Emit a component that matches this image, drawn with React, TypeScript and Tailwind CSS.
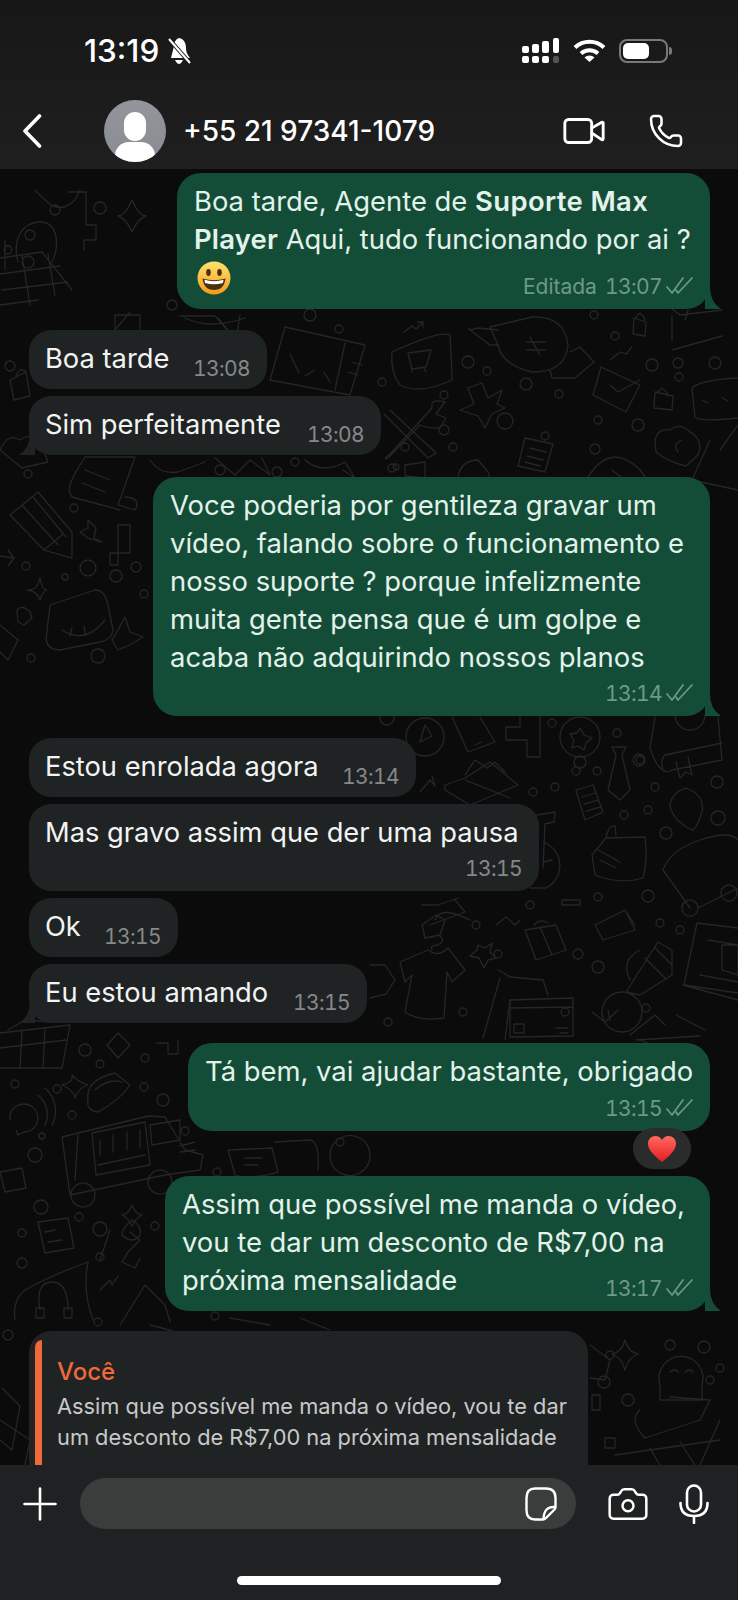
import { Camera, Phone, Video } from "lucide-react";
import type { ReactNode } from "react";

const font = "font-['Inter','Noto_Sans',sans-serif]";

// wallpaper doodles, in page coordinates
const doodleCircles = [
  [8, 250, 4], [28, 262, 6], [30, 235, 5], [55, 210, 5], [100, 208, 6], [10, 366, 5],
  [172, 305, 5], [310, 315, 6], [339, 329, 4], [220, 470, 5], [277, 472, 5], [295, 462, 4],
  [28, 474, 4], [74, 508, 4], [88, 568, 8], [116, 576, 6], [136, 567, 5], [26, 566, 4],
  [144, 594, 4], [65, 577, 3], [31, 658, 4], [98, 656, 7], [468, 362, 6], [487, 371, 4],
  [382, 382, 4], [526, 384, 6], [559, 394, 4], [444, 395, 4], [444, 430, 5], [453, 447, 4],
  [505, 421, 8], [598, 420, 4], [638, 425, 6], [595, 449, 5], [652, 365, 6], [678, 363, 5],
  [615, 336, 4], [594, 315, 4], [715, 363, 6], [679, 377, 4], [392, 468, 4], [405, 447, 4],
  [396, 467, 3], [545, 436, 4], [387, 718, 7], [552, 723, 4], [617, 733, 4], [639, 760, 6],
  [580, 762, 6], [576, 771, 4], [597, 771, 4], [533, 792, 4], [555, 787, 4], [655, 787, 4],
  [640, 760, 4], [648, 810, 4], [624, 815, 4], [717, 782, 6], [718, 818, 7], [666, 833, 6],
  [530, 905, 4], [598, 897, 4], [648, 896, 6], [660, 923, 4], [680, 930, 4], [578, 954, 5],
  [598, 967, 6], [498, 954, 4], [476, 925, 4], [463, 1012, 4], [565, 1012, 4], [646, 1008, 4],
  [388, 1022, 4], [85, 1050, 6], [145, 1058, 4], [100, 1064, 4], [15, 1084, 4], [57, 1089, 4],
  [144, 1087, 4], [163, 1100, 6], [72, 1115, 4], [35, 1155, 7], [42, 1136, 3], [185, 1131, 4],
  [217, 1172, 4], [340, 1142, 4], [41, 1207, 7], [79, 1217, 4], [22, 1233, 4], [100, 1229, 7],
  [155, 1226, 4], [22, 1263, 5], [100, 1257, 4], [98, 1322, 4], [215, 1316, 4], [610, 1355, 4],
  [670, 1345, 5], [704, 1347, 6], [720, 1368, 4], [604, 1382, 6], [628, 1400, 6], [710, 1380, 4],
  [150, 1345, 5], [168, 1374, 4], [190, 1338, 5], [8, 1335, 5],
];

const doodlePaths = [
  // top cart and head
  "M0 258 L42 252 L72 290 M2 290 L68 282 M22 256 L30 305 M48 254 L55 296 M0 274 L60 266 M0 305 L38 300",
  "M18 262 C12 240 22 222 40 222 C58 222 60 245 52 262",
  "M5 240 L5 270 M35 190 L45 200 Q60 215 75 200 L80 190",
  "M68 192 L86 192 L86 225 L96 225 L96 240 L84 240 L84 250",
  "M132 200 Q126 215 118 216 Q126 218 132 232 Q138 218 146 216 Q138 215 132 200",
  // top strip
  "M10 380 L26 372 L30 396 L14 400 Z M16 376 Q20 366 26 372",
  "M0 450 Q8 432 20 440 Q30 432 40 442 L48 462 L22 468 Z",
  "M115 330 L130 312 M180 316 L215 316 L236 340 L240 315",
  "M115 315 L140 315 L140 340 L115 340 Z",
  // chart panel
  "M285 327 L365 345 L350 395 L270 380 Z M290 354 L299 373 M305 376 L315 370 M324 372 L330 382 M345 343 L335 390 M352 362 L362 365 M348 372 L358 375",
  "M185 318 Q210 330 245 318 M218 318 L240 345",
  // scroll
  "M85 457 L135 457 L118 505 L135 510 Q142 498 125 497 M85 457 C70 480 66 490 72 497 L120 510 M85 470 L110 480 M82 483 L105 492",
  "M150 460 Q160 475 178 472 L205 462 M215 458 L235 475 L250 460 L270 475 L262 458",
  "M305 460 Q322 475 345 462 L355 478 L343 470",
  // pencil
  "M10 515 L38 492 L72 532 L72 558 L44 550 Z M22 505 L58 545 M33 497 L66 537 M44 550 L62 535",
  // apple core and tetris
  "M88 520 L96 528 L94 538 L102 542 L88 538 L80 532 L88 528 Z",
  "M118 525 L130 525 L130 553 L118 553 L118 565 L110 565 L110 553 L118 553 Z",
  "M0 556 L14 558 L8 550 M14 558 L8 566",
  "M40 578 Q38 590 28 590 Q38 592 40 600 Q42 592 47 590 Q42 590 40 578",
  "M17 610 Q22 604 30 612 L32 618 L24 625 L18 622 Z",
  "M0 625 L18 640 L8 660 L0 652",
  // monster
  "M50 605 L95 590 Q105 590 108 605 L113 630 Q112 640 100 642 L60 650 Q48 650 46 640 Z M62 630 Q85 645 105 620 M70 636 L72 628 M85 634 L84 626",
  "M125 617 L130 632 L143 637 L130 645 L118 650 L112 640 L118 630 Z",
  // shopping bag
  "M392 352 Q440 330 450 335 Q452 370 452 380 Q420 395 400 385 Q390 372 392 352 Z M408 353 L431 350 L426 367 L412 369 Z M412 369 L412 372 M424 368 L426 372",
  "M404 332 L412 326 L416 329 L423 322 M418 322 L423 322 L423 327",
  // rupee blob and arrows
  "M490 327 L532 317 Q565 316 568 345 Q566 372 532 372 Q502 365 498 345 Z M498 330 L478 328 L470 330 L468 328 M527 342 L545 342 M527 350 L545 350 M530 337 L540 355",
  "M470 330 L490 345 L498 345 M550 370 L552 378 L575 378 L594 362 L580 347 L570 352",
  "M610 360 L620 352 L626 354 L632 347",
  // burst
  "M482 383 L488 398 L502 390 L497 404 L505 408 L492 414 L485 428 L478 416 L460 410 L474 404 L468 388 Z",
  // wrench
  "M390 454 L432 408 Q430 398 445 402 L436 414 L446 418 L440 428 Q426 428 420 425 L388 458 Q382 460 390 454 M390 410 L436 453 L428 458 L384 414",
  // note and checked box
  "M525 438 L553 444 L545 472 L518 466 Z M530 448 L546 452 M527 456 L543 460 M525 462 L540 466",
  "M601 367 L640 385 L626 412 L593 395 Z M610 385 L618 392 L640 380",
  // locks
  "M634 318 L646 322 L645 336 L633 334 Z M636 318 Q640 308 645 320",
  "M655 392 L673 396 L672 410 L654 408 Z M658 392 Q664 384 668 396",
  // password box, cart
  "M692 388 Q700 380 738 378 M692 388 L695 417 Q700 422 738 418 M702 400 L708 403 M722 398 L728 401",
  "M660 300 L680 315 L722 310 M672 316 L672 340 M688 310 L685 320 M672 350 L722 336",
  // cloud, document
  "M655 440 Q658 428 670 430 Q680 422 690 432 Q704 440 698 455 L686 466 Q668 462 656 452 Z M682 440 Q672 444 678 452",
  "M586 480 Q610 440 640 470 L646 478 M612 470 L622 478",
  "M710 440 L692 480 L738 490 M738 425 L720 450",
  "M405 465 L425 462 L425 478 L405 476 Z M458 476 Q462 460 478 460 L488 472 L490 478",
  // play circle, phone, tetris
  "M425 725 L432 736 L420 742 Z M406 737 A19 19 0 1 0 444 737 A19 19 0 1 0 406 737",
  "M452 717 L468 752 L495 742 L480 717 M475 745 L482 742",
  "M506 727 L520 727 L520 712 L540 712 L540 757 L527 757 L527 740 L506 740 Z",
  // star coin, tie, book
  "M560 737 A20 20 0 1 0 600 737 A20 20 0 1 0 560 737 M580 728 L584 735 L592 738 L586 743 L584 750 L578 746 L572 748 L574 740 L570 734 L577 733 Z",
  "M612 747 L626 747 L622 755 L630 790 L620 800 L608 790 L616 755 Z",
  "M655 717 L650 748 Q660 778 672 770 L722 760 L718 717 M663 770 Q660 760 665 755 L722 743 M676 762 L680 778 L686 772 L692 775 L688 757",
  "M675 715 A15 15 0 0 0 705 715",
  // fruit plate, arrow, dress
  "M445 785 L465 778 L490 762 L518 785 L506 790 L470 805 L445 790 Z M465 780 L510 798",
  "M465 775 L475 760 L487 768 L495 762 L505 772",
  "M420 792 L430 780 L435 786 L432 776",
  "M576 790 L593 785 L603 812 L585 820 Z M582 797 L595 793 M584 804 L598 800 M586 811 L600 807",
  "M686 788 Q705 795 702 812 Q696 830 692 830 Q672 820 670 805 Q672 792 686 788 Z",
  // bags
  "M592 855 L606 838 L645 837 Q648 860 643 878 Q620 885 595 875 Z M606 838 Q608 825 615 826 L616 836 M598 850 L620 862 M600 860 L616 868",
  // bicycle
  "M537 815 L555 812 L554 822 L545 824 L543 868 M543 842 A25 25 0 0 1 546 888 L530 888 M543 862 L552 860",
  // blob and dumbbell
  "M663 870 Q670 850 700 840 Q730 830 738 840 M663 870 L690 908 M698 908 L738 888",
  "M698 908 A8 8 0 1 0 698 908.1 M737 893 A8 8 0 1 0 737 893.1",
  "M562 900 L580 900 L580 905 L562 905 Z M595 925 L625 910 L635 930 L603 940 Z M625 910 L635 925",
  // shirt, hanger, star, sparkle
  "M400 962 L428 950 Q438 958 448 948 L465 970 L452 982 L447 972 L444 1018 Q420 1022 405 1012 L412 975 L405 982 Z M432 950 Q430 945 438 945 Q446 940 440 936",
  "M478 945 L485 948 L492 943 L490 952 L496 958 L488 960 L484 968 L479 958 L470 956 L477 950 Z",
  "M422 925 L436 915 L445 920 L440 935 L425 938 Z",
  // stems
  "M422 905 L438 905 L458 898 M470 920 Q440 905 435 920 M455 900 L465 912 L430 925",
  "M496 925 L506 917 L515 925 L520 920",
  // luggage
  "M525 930 L556 925 L566 950 L536 960 Z M534 925 Q540 918 548 923 M540 927 L552 955",
  "M602 1012 A20 20 0 1 0 642 1012 A20 20 0 1 0 602 1012 M592 1012 L605 1022 L618 1010 M608 1010 L610 1020",
  "M498 970 L510 977 L543 980 L548 995 M500 978 L483 1038 M510 1000 L505 1040",
  // card
  "M510 1000 L573 998 L573 1036 L510 1037 Z M510 1008 L573 1007 M514 1024 L524 1024 L524 1033 L514 1033 Z M556 1028 L568 1028 M560 1033 L568 1033",
  // corn
  "M626 992 L658 942 L672 950 L672 975 L640 995 Z M630 980 Q620 960 640 950 M645 958 L665 978 M655 948 L672 965",
  // laptop and gift
  "M697 923 L738 928 M697 923 L684 985 L738 993 M683 985 L738 1000 M708 940 L738 945 M700 975 L738 982 M722 945 L738 945 L738 975 L722 970 Z",
  // gear
  "M370 965 L385 965 L395 980 L386 994 L370 998",
  "M630 1035 L655 1015 L665 1025 M636 1040 L700 1036 M676 1015 L705 1030 M640 1040 L650 1044",
  // basket lower left
  "M0 1033 L70 1025 L62 1068 L0 1068 M0 1048 L66 1040 M22 1030 L20 1068 M45 1028 L43 1068 M8 1030 L25 1020 L52 1022",
  "M118 1033 L130 1045 L118 1058 L107 1045 Z",
  "M72 1075 Q74 1082 62 1085 Q74 1090 75 1098 Q78 1088 88 1085 Q78 1082 72 1075",
  "M157 1043 L168 1043 L168 1054 L178 1054 L178 1040",
  // taco
  "M88 1100 Q85 1080 115 1073 L130 1085 Q120 1100 98 1112 Q86 1110 88 1100 Z M95 1090 Q108 1078 122 1082",
  // radio
  "M10 1120 A14 14 0 1 1 24 1132 L18 1135 L16 1130 M38 1095 A25 25 0 0 1 45 1125 M45 1088 A30 30 0 0 1 52 1125",
  // van
  "M62 1137 L148 1116 L165 1117 L185 1150 L203 1155 L200 1170 L165 1175 L70 1195 Z M78 1135 L75 1180 M92 1133 L145 1122 L150 1165 L96 1175 Z M100 1140 L100 1155 M113 1135 L113 1152 M127 1132 L127 1150 M140 1130 L140 1148 M150 1125 L180 1120 L180 1140 L152 1145 Z M98 1165 L145 1155",
  "M95 1195 A12 12 0 1 0 95 1195.1 M172 1182 A12 12 0 1 0 172 1182.1",
  "M195 1142 L180 1146 M195 1150 L180 1152",
  // bubble and square
  "M228 1150 L272 1148 L278 1172 Q250 1180 235 1175 Z M245 1158 L262 1158 M245 1165 L258 1165",
  "M275 1142 L310 1140 Q320 1142 318 1170 M370 1155 A20 20 0 1 0 370 1156",
  // money bag
  "M0 1172 L22 1168 L26 1188 L5 1192 Z",
  // note, pin, doll
  "M38 1222 L68 1218 L74 1248 L45 1253 Z M45 1232 L55 1230 M48 1242 L62 1240",
  "M110 1230 L100 1260",
  "M132 1220 Q122 1228 122 1235 Q132 1245 140 1235 Q142 1225 132 1220 Z",
  "M130 1232 L140 1240 L128 1252 L122 1262 L135 1268 L140 1258",
  "M132 1205 Q128 1215 122 1215 Q128 1218 132 1226 Q136 1218 142 1215 Q136 1215 132 1205",
  // headset blob
  "M88 1262 Q52 1275 25 1290 Q12 1300 15 1320 M88 1262 Q82 1290 93 1320 M40 1310 Q35 1282 52 1282 Q68 1282 68 1310 M36 1308 L44 1308 L44 1318 L36 1318 Z M64 1308 L72 1308 L72 1318 L64 1318 Z",
  "M100 1290 L110 1280 L112 1285 L118 1276",
  "M120 1325 L145 1285 L165 1305 L170 1322",
  "M230 1318 L270 1325 M300 1318 L330 1330",
  // lower strip
  "M2 1388 L20 1406 L12 1450 L0 1440 M0 1420 L30 1440 L25 1465",
  // right bottom
  "M625 1340 Q622 1352 612 1354 Q622 1358 625 1370 Q628 1358 638 1354 Q628 1352 625 1340",
  "M660 1385 A22 22 0 1 1 702 1385 L702 1400 L660 1400 Z M670 1372 Q675 1368 678 1372 M685 1372 Q690 1368 693 1372",
  "M640 1410 Q628 1420 645 1438 L700 1420 L710 1400 L670 1397",
  "M605 1438 L615 1438 L615 1448 L605 1448 Z M592 1395 L600 1395 L600 1410 L592 1410 Z",
  "M615 1455 L720 1440 M650 1448 L660 1465 M680 1442 L695 1465 M720 1420 L700 1465",
  "M590 1345 L610 1360 L605 1380 L590 1378",
  "M120 1332 L135 1350 L110 1345 L100 1332 M150 1325 Q170 1330 175 1332",
];

function Doodles() {
  return (
    <svg
      viewBox="0 169 738 1296"
      className="absolute inset-0 h-full w-full"
      fill="none"
      stroke="#262626"
      strokeWidth="1.3"
      strokeLinejoin="round"
      strokeLinecap="round"
    >
      {doodlePaths.map((d, i) => (
        <path key={i} d={d} />
      ))}
      {doodleCircles.map(([cx, cy, r], i) => (
        <circle key={i} cx={cx} cy={cy} r={r} />
      ))}
    </svg>
  );
}

function Ticks() {
  return (
    <svg width="28" height="18" viewBox="0 0 28 18" fill="none" stroke="#6d9a86" strokeWidth="1.7" strokeLinecap="round" strokeLinejoin="round" className="ml-1 mb-[3px] shrink-0">
      <path d="M1 10 L6 16 L17 1" />
      <path d="M10 13 L12 16 L26 1" />
    </svg>
  );
}

function Out({ width, tail, children, time, pre, rowClass }: { width: string; tail?: boolean; children: ReactNode; time: string; pre?: string; rowClass?: string }) {
  return (
    <div className={`relative self-end mr-[28px] rounded-[24px] bg-[#134d38] pl-[17px] pr-[16px] pt-[9px] pb-[4px] ${width}`}>
      <div className="whitespace-nowrap text-[27.4px] leading-[38px] text-[#e3f2ea]">{children}</div>
      <div className={`flex h-[36px] items-center justify-end text-[21px] text-[#6d9a86] ${rowClass ?? ""}`}>
        {pre && <span className="mr-[8px]">{pre}</span>}
        <span className="tracking-[-0.6px] tabular-nums">{time}</span>
        <Ticks />
      </div>
      {tail && (
        <svg width="16" height="22" viewBox="0 0 16 22" className="absolute -right-[11px] bottom-0" fill="#134d38">
          <path d="M0 0 L5 0 Q5 15 16 22 L0 22 Z" />
        </svg>
      )}
    </div>
  );
}

function In({ width, tail, children, time, stacked }: { width: string; tail?: boolean; children: ReactNode; time: string; stacked?: boolean }) {
  return (
    <div className={`relative self-start ml-[29px] rounded-[22px] bg-[#202323] pl-[16px] pr-[17px] pt-[10px] ${stacked ? "pb-[5px]" : "flex h-[59px] justify-between"} ${width}`}>
      <div className="whitespace-nowrap text-[27.3px] leading-[38px] text-[#f2f3f3]">{children}</div>
      <div className={`text-[21px] tracking-[-0.6px] tabular-nums text-[#85888a] ${stacked ? "flex h-[34px] items-center justify-end" : "mt-[16px] leading-[26px]"}`}>{time}</div>
      {tail && (
        <svg width="16" height="22" viewBox="0 0 16 22" className="absolute -left-[10px] bottom-0" fill="#202323">
          <path d="M16 0 L11 0 Q11 15 0 22 L16 22 Z" />
        </svg>
      )}
    </div>
  );
}

function Smiley() {
  return (
    <svg width="34" height="34" viewBox="0 0 34 34" className="mt-[2px]">
      <defs>
        <linearGradient id="sm" x1="0" y1="0" x2="0" y2="1">
          <stop offset="0" stopColor="#ffe36b" />
          <stop offset="1" stopColor="#f39a1f" />
        </linearGradient>
      </defs>
      <circle cx="17" cy="17" r="16.5" fill="url(#sm)" />
      <ellipse cx="11.5" cy="11.5" rx="2.3" ry="3.4" fill="#4a2f10" />
      <ellipse cx="22.5" cy="11.5" rx="2.3" ry="3.4" fill="#4a2f10" />
      <path d="M5.5 17.5 Q17 21 28.5 17.5 Q27 29 17 29 Q7 29 5.5 17.5 Z" fill="#4a2f10" />
      <path d="M7.5 18.8 Q17 21.5 26.5 18.8 L26 22 Q17 24.5 8 22 Z" fill="#fff" />
    </svg>
  );
}

function Heart() {
  return (
    <svg width="30" height="28" viewBox="0 0 30 28">
      <defs>
        <linearGradient id="ht" x1="0" y1="0" x2="0" y2="1">
          <stop offset="0" stopColor="#ff6a5e" />
          <stop offset="1" stopColor="#e51c22" />
        </linearGradient>
      </defs>
      <path d="M15 27 C5 19 1 14 1 8.5 C1 4 4.5 1 8.5 1 C11.5 1 14 2.8 15 5 C16 2.8 18.5 1 21.5 1 C25.5 1 29 4 29 8.5 C29 14 25 19 15 27 Z" fill="url(#ht)" />
    </svg>
  );
}

function StatusIcons() {
  return (
    <div className="flex items-center">
      {/* signal, two sims */}
      <svg width="38" height="26" viewBox="0 0 38 26" fill="#fff">
        <rect x="0" y="8" width="7" height="7" rx="2" />
        <rect x="0" y="18" width="7" height="7" rx="2" />
        <rect x="10" y="6" width="7" height="9" rx="2" />
        <rect x="10" y="18" width="7" height="7" rx="2" />
        <rect x="20" y="3" width="7" height="12" rx="2" />
        <rect x="20" y="18" width="7" height="7" rx="2" />
        <rect x="31" y="0" width="6" height="15" rx="2" />
        <rect x="31" y="18" width="6" height="7" rx="2" fill="#555" />
      </svg>
      <svg width="33" height="24" viewBox="0 0 33 24" fill="none" stroke="#fff" strokeWidth="4" className="ml-[13px]">
        <path d="M2 8.5 A21 21 0 0 1 31 8.5" />
        <path d="M8 14.5 A13 13 0 0 1 25 14.5" />
        <path d="M16.5 23 L11.5 18.5 A7 7 0 0 1 21.5 18.5 Z" fill="#fff" stroke="none" />
      </svg>
      <div className="ml-[13px] flex items-center">
        <div className="flex h-[24px] w-[49px] items-center rounded-[8px] border-2 border-[#77797a] p-[2px]">
          <div className="h-full w-[26px] rounded-[5px] bg-white" />
        </div>
        <div className="ml-[1px] h-[8px] w-[3px] rounded-r-full bg-[#77797a]" />
      </div>
    </div>
  );
}

export default function App() {
  return (
    <div className={`flex h-[1600px] w-full flex-col overflow-hidden bg-[#0b0b0b] ${font}`}>
      {/* top bar */}
      <header className="h-[169px] shrink-0 bg-gradient-to-b from-[#171717] to-[#1f1f1f] text-white">
        <div className="flex h-[101px] items-center pl-[84px] pr-[66px] pt-[1px]">
          <span className="text-[31.5px] font-medium">13:19</span>
          <svg width="26" height="28" viewBox="0 0 26 28" fill="#fff" className="ml-[7px]">
            <path d="M13 1 C18 2 20 6 20 11 C20 16 22 18 24 21 L5 21 L8 9 C8 5 10 2 13 1 Z" />
            <path d="M9 23 L17 23 Q15 27 13 27 Q11 27 9 23 Z" />
            <path d="M3 2 L24 26" stroke="#1a1a1a" strokeWidth="4" />
            <path d="M3 2 L24 26" stroke="#fff" strokeWidth="2" />
          </svg>
          <div className="ml-auto">
            <StatusIcons />
          </div>
        </div>
        <div className="flex h-[60px] items-center pl-[22px] pr-[54px]">
          <svg width="20" height="34" viewBox="0 0 20 34" fill="none" stroke="#fff" strokeWidth="3.6" strokeLinecap="round" strokeLinejoin="round">
            <path d="M17.5 2 L3 17 L17.5 32" />
          </svg>
          <div className="relative ml-[62px] h-[62px] w-[62px] shrink-0 overflow-hidden rounded-full bg-gradient-to-b from-[#93959c] to-[#8a8c94]">
            <div className="absolute left-[20px] top-[12px] h-[29px] w-[22px] rounded-full bg-white" />
            <div className="absolute left-[11px] top-[42px] h-[28px] w-[40px] rounded-full bg-white" />
          </div>
          <span className="ml-[17px] text-[28px] font-medium">+55 21 97341-1079</span>
          <Video size={46} strokeWidth={1.5} className="ml-auto" />
          <Phone size={36} strokeWidth={1.7} className="ml-[41px]" />
        </div>
      </header>

      {/* messages */}
      <main className="relative min-h-0 flex-1 overflow-hidden">
        <Doodles />
        <div className="relative flex flex-col pt-[4px]">
          <Out width="w-[533px]" tail time="13:07" pre="Editada" rowClass="mt-[11px]">
            Boa tarde, Agente de <b className="font-semibold tracking-[0.4px]">Suporte Max</b>
            <br />
            <b className="font-semibold tracking-[0.2px]">Player</b> Aqui, tudo funcionando por ai ?
            <div className="absolute bottom-[14px] left-[20px]">
              <Smiley />
            </div>
          </Out>
          <div className="mt-[21px]" />
          <In width="w-[238px]" time="13:08">Boa tarde</In>
          <div className="mt-[7px]" />
          <In width="w-[352px]" tail time="13:08">Sim perfeitamente</In>
          <div className="mt-[22px]" />
          <Out width="w-[557px]" tail time="13:14">
            Voce poderia por gentileza gravar um
            <br />
            vídeo, falando sobre o funcionamento e
            <br />
            nosso suporte ? porque infelizmente
            <br />
            muita gente pensa que é um golpe e
            <br />
            acaba não adquirindo nossos planos
          </Out>
          <div className="mt-[22px]" />
          <In width="w-[387px]" time="13:14">Estou enrolada agora</In>
          <div className="mt-[7px]" />
          <In width="w-[510px]" stacked time="13:15">Mas gravo assim que der uma pausa</In>
          <div className="mt-[7px]" />
          <In width="w-[149px]" time="13:15">Ok</In>
          <div className="mt-[7px]" />
          <In width="w-[338px]" tail time="13:15">Eu estou amando</In>
          <div className="mt-[20px]" />
          <div className="relative self-end">
            <Out width="w-[522px]" time="13:15" rowClass="mt-[1px]">Tá bem, vai ajudar bastante, obrigado</Out>
            <div className="absolute right-[47px] top-[85px] flex h-[41px] w-[58px] items-center justify-center rounded-full bg-[#2a2c2c]">
              <Heart />
            </div>
          </div>
          <div className="mt-[45px]" />
          <Out width="w-[545px]" tail time="13:17" rowClass="-mt-[28px]">
            Assim que possível me manda o vídeo,
            <br />
            vou te dar um desconto de R$7,00 na
            <br />
            próxima mensalidade
          </Out>
          <div className="mt-[20px]" />
          {/* quoted reply, cut off by the composer */}
          <div className="ml-[29px] w-[559px] rounded-t-[22px] bg-[#202323] pl-[6px] pt-[9px]">
            <div className="flex h-[200px]">
              <div className="w-[7px] shrink-0 rounded-l-[8px] bg-[#f0693a]" />
              <div className="pl-[15px] pt-[12px] whitespace-nowrap">
                <div className="text-[24px] font-medium leading-[39px] text-[#f0693a]">Você</div>
                <div className="text-[21.8px] leading-[31px] text-[#c7c9ca]">
                  Assim que possível me manda o vídeo, vou te dar
                  <br />
                  um desconto de R$7,00 na próxima mensalidade
                </div>
              </div>
            </div>
          </div>
        </div>
      </main>

      {/* composer */}
      <footer className="flex h-[135px] shrink-0 flex-col bg-[#1f2122] text-white">
        <div className="flex items-center pl-[23px] pt-[13px]">
          <svg width="34" height="34" viewBox="0 0 34 34" stroke="#fff" strokeWidth="2.6" strokeLinecap="round">
            <path d="M17 1.5 L17 32.5 M1.5 17 L32.5 17" />
          </svg>
          <div className="ml-[23px] flex h-[51px] w-[496px] items-center justify-end rounded-full bg-[#3b3d3d] pr-[19px]">
            <svg width="32" height="34" viewBox="0 0 32 34" fill="none" stroke="#fff" strokeWidth="2.4" strokeLinejoin="round" strokeLinecap="round">
              <path d="M10 1.5 L21 1.5 Q30.5 1.5 30.5 11 L30.5 20 Q30.5 22 29 23 L21 31 Q19.5 32.5 17.5 32.5 L10 32.5 Q1.5 32.5 1.5 23 L1.5 11 Q1.5 1.5 10 1.5 Z" />
              <path d="M30 20 Q19 19 18.5 32" />
            </svg>
          </div>
          <Camera size={44} strokeWidth={1.35} className="ml-[30px]" />
          <svg width="30" height="40" viewBox="0 0 30 40" fill="none" stroke="#fff" strokeWidth="2.6" strokeLinecap="round" className="ml-[29px]">
            <rect x="8" y="1.5" width="14" height="26" rx="7" />
            <path d="M1.5 19 Q1.5 32 15 32 Q28.5 32 28.5 19 M15 32 L15 39" />
          </svg>
        </div>
        <div className="mt-[47px] flex justify-center">
          <div className="h-[9px] w-[264px] rounded-full bg-white" />
        </div>
      </footer>
    </div>
  );
}
